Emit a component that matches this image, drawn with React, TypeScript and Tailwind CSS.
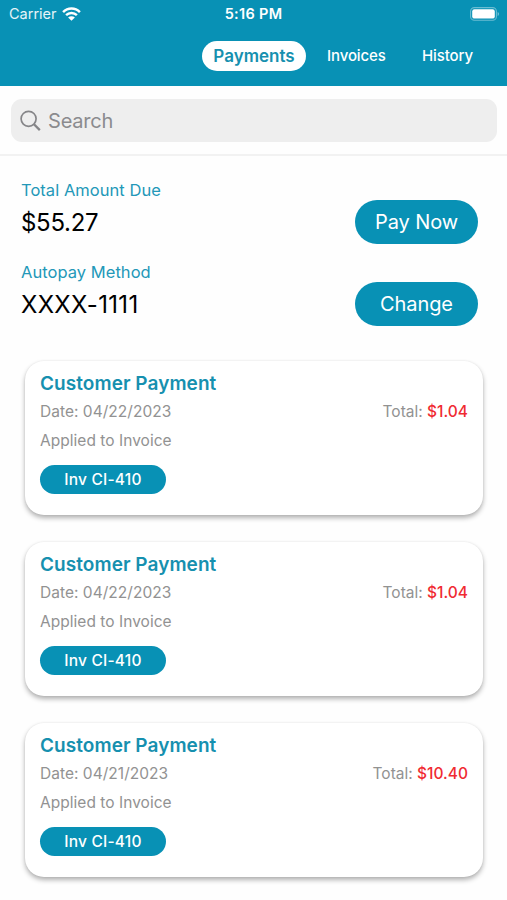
import React from "react";

type Payment = { date: string; total: string };

const payments: Payment[] = [
  { date: "04/22/2023", total: "$1.04" },
  { date: "04/22/2023", total: "$1.04" },
  { date: "04/21/2023", total: "$10.40" },
];

function WifiIcon() {
  return (
    <svg width="19" height="14" viewBox="0 0 19 14" fill="none" stroke="white" strokeWidth="2.5">
      <path d="M1.1 5.1C5.8 .4 13.2 .4 17.9 5.1" />
      <path d="M4.1 8.2C7.1 5.3 11.9 5.3 14.9 8.2" />
      <path d="M9.5 13.7 6.1 10.4C8 8.7 11 8.7 12.9 10.4Z" fill="white" stroke="none" />
    </svg>
  );
}

function BatteryIcon() {
  return (
    <svg width="30" height="14" viewBox="0 0 30 14">
      <rect x="0.6" y="0.6" width="25.8" height="12.6" rx="3.8" fill="none" stroke="white" strokeOpacity="0.4" strokeWidth="1.1" />
      <rect x="2.2" y="2.2" width="22.6" height="9.4" rx="2.2" fill="white" />
      <path d="M27.7 5v4c1.6-.7 1.6-3.3 0-4Z" fill="white" fillOpacity="0.5" />
    </svg>
  );
}

function SearchIcon() {
  return (
    <svg width="22" height="22" viewBox="0 0 22 22" fill="none" stroke="#858588">
      <circle cx="8.6" cy="8.8" r="7.5" strokeWidth="1.7" />
      <path d="M14 14.3 19.8 20.1" strokeWidth="2.3" />
    </svg>
  );
}

function SummaryRow({ label, value, action }: { label: string; value: React.ReactNode; action: string }) {
  return (
    <div className="flex h-[82px] items-start justify-between">
      <div>
        <div className="h-[22px] text-[16.5px] leading-[22px] tracking-[0.04px] text-[#2398b8]">{label}</div>
        <div className="mt-[6px] h-8 text-[24px] leading-8 text-black">{value}</div>
      </div>
      <button className="mt-[21px] h-[44px] w-[123px] rounded-full bg-[#0891b5] pt-px text-[20px] leading-[43px] tracking-[-0.1px] text-white">
        {action}
      </button>
    </div>
  );
}

function PaymentCard({ date, total }: Payment) {
  return (
    <article className="h-[154px] rounded-[19px] bg-white px-[15px] pt-[9px] shadow-[0_3px_5px_rgba(0,0,0,0.3),0_0_2px_rgba(0,0,0,0.08)]">
      <h2 className="h-[27px] text-[19px] leading-[27px] font-semibold tracking-[0.06px] text-[#1690af]">Customer Payment</h2>
      <div className="mt-1 flex h-[22px] justify-between text-[15.5px] leading-[22px] text-[#929292]">
        <span className="tracking-[0.03px]">Date: {date}</span>
        <span>
          Total: <span className="font-medium text-[#f02a31]">{total}</span>
        </span>
      </div>
      <div className="mt-[7px] h-[22px] text-[15.5px] leading-[22px] tracking-[0.03px] text-[#929292]">Applied to Invoice</div>
      <button className="mt-[13px] block h-[29px] w-[126px] rounded-full bg-[#0891b5] text-[15.5px] leading-[29px] font-medium tracking-[0.2px] text-white">
        Inv CI-410
      </button>
    </article>
  );
}

export default function App() {
  return (
    <div className="flex h-[900px] w-[507px] flex-col overflow-hidden bg-[#fefefe] font-['Inter','Liberation_Sans',sans-serif]">
      <header className="h-[86px] shrink-0 bg-[#0891b5] text-white">
        <div className="grid h-[28px] grid-cols-3 items-center pr-[7px] pl-[9px]">
          <div className="flex items-center gap-[5px] text-[14.5px] leading-[28px] text-white/90">
            <span>Carrier</span>
            <WifiIcon />
          </div>
          <div className="pr-[2px] text-center text-[14.5px] leading-[28px] font-semibold tracking-[0.3px]">5:16 PM</div>
          <div className="flex justify-end">
            <BatteryIcon />
          </div>
        </div>
        <nav className="mt-[13px] flex h-[30px] items-center pl-[202px] text-[15px] leading-[30px] font-medium tracking-[-0.1px]">
          <span className="h-[30px] w-[104px] rounded-full bg-white text-center text-[17px] font-semibold tracking-[0px] text-[#1690af]">Payments</span>
          <span className="ml-[21px] w-[58px] whitespace-nowrap">Invoices</span>
          <span className="ml-[37px] whitespace-nowrap">History</span>
        </nav>
      </header>

      <div className="h-[70px] shrink-0 border-b-2 border-[#f2f2f2] px-[11px] pt-[13px]">
        <div className="flex h-[43px] w-[486px] items-center gap-[6px] rounded-[11px] bg-[#eeeeee] pl-[9px]">
          <SearchIcon />
          <span className="pt-[2px] text-[20px] leading-[41px] tracking-[-0.2px] text-[#8b8b8e]">Search</span>
        </div>
      </div>

      <section className="h-[205px] shrink-0 pt-[23px] pr-[29px] pl-[21px]">
        <SummaryRow label="Total Amount Due" value={<span className="tracking-[-0.3px]">$55.27</span>} action="Pay Now" />
        <SummaryRow label="Autopay Method" value={<span className="tracking-[0.3px]">XXXX-1111</span>} action="Change" />
      </section>

      <main className="flex flex-col gap-[27px] pr-[24px] pl-[25px]">
        {payments.map((payment, index) => (
          <PaymentCard key={index} {...payment} />
        ))}
      </main>
    </div>
  );
}
